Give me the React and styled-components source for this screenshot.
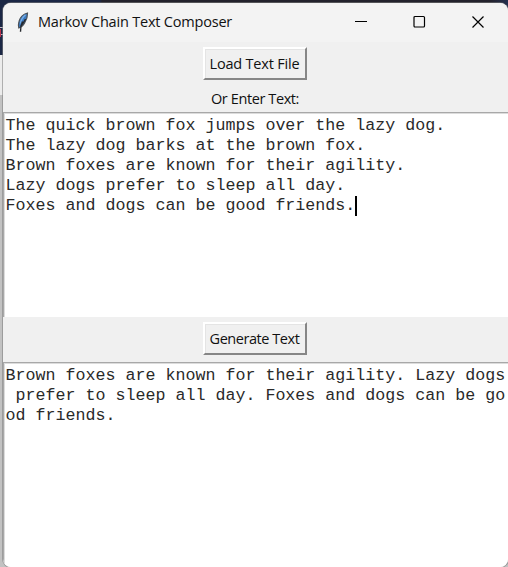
import React from 'react';
import styled, { createGlobalStyle } from 'styled-components';

const Global = createGlobalStyle`
  * { box-sizing: border-box; }
  body { margin: 0; overflow: hidden; }
`;

const Desktop = styled.div`
  width: 508px;
  height: 567px;
  padding: 3px 0 0 3px;
  overflow: hidden;
  background:
    linear-gradient(#b9304a, #b9304a) 0 29px / 1px 8px no-repeat,
    linear-gradient(#c5b9c4, #c5b9c4) 0 27px / 3px 1px no-repeat,
    linear-gradient(#c5b9c4, #c5b9c4) 0 34px / 3px 1px no-repeat,
    linear-gradient(90deg, #1b2745 0, #1b2745 100px, #23222c 102px, #23222c 490px, #24304f 508px) 0 0 / 100% 55px no-repeat,
    linear-gradient(#ececec, #ececec) 0 55px / 100% 40px no-repeat,
    #c2c2c2;
`;

const Window = styled.main`
  display: flex;
  flex-direction: column;
  width: 505px;
  height: 564px;
  overflow: hidden;
  border-radius: 8px;
  background: #f0f0f0;
  box-shadow: 0 0 0 1px rgba(125, 125, 125, 0.55);
`;

const TitleBar = styled.header`
  display: flex;
  align-items: center;
  flex: 0 0 39px;
  padding: 0 1px 1px 12px;
  background: #f3f3f3;
`;

const Title = styled.h1`
  flex: 1;
  margin: 0 0 0 7px;
  font: 400 14.5px/20px 'Open Sans', 'Noto Sans', sans-serif;
  letter-spacing: -0.2px;
  color: #111;
  white-space: nowrap;
`;

const Controls = styled.div`
  display: flex;
  height: 100%;
`;

const Control = styled.button`
  display: grid;
  place-items: center;
  width: 58px;
  padding: 0;
  border: 0;
  background: transparent;
`;

const ButtonRow = styled.div`
  display: flex;
  justify-content: center;
  flex: 0 0 auto;
  padding: 5px 2px ${(p) => p.$bottom}px 0;
`;

const PushButton = styled.button`
  width: 104px;
  height: 33px;
  padding: 0;
  border: 2px solid;
  border-color: #fff #868686 #868686 #fff;
  background: #f0f0f0;
  box-shadow: inset 1px 1px #e4e4e4;
  font: 400 14.5px/27px 'Open Sans', 'Noto Sans', sans-serif;
  letter-spacing: ${(p) => p.$tracking}px;
  color: #111;
  white-space: nowrap;
`;

const Label = styled.label`
  flex: 0 0 28px;
  min-height: 0;
  padding-right: 1px;
  font: 400 14.5px/30px 'Open Sans', 'Noto Sans', sans-serif;
  letter-spacing: -0.4px;
  text-align: center;
  color: #111;
`;

const TextPane = styled.section`
  flex: 0 0 ${(p) => p.$height}px;
  padding: 3px 0 0 1.5px;
  border: solid #a8a8a8;
  border-width: 1px 0 0 1px;
  box-shadow: inset 1px 1px #dcdcdc;
  background: #fff;
  font: 400 16.664px/20px 'Liberation Mono', monospace;
  color: #2a2a2a;
  white-space: pre;
`;

const Caret = styled.span`
  display: inline-block;
  width: 2px;
  height: 20px;
  vertical-align: top;
  background: #000;
`;

const Feather = () => (
  <svg width="16" height="22" viewBox="0 0 16 22">
    <path d="M12.500 2C8.500 3 5 6.500 4 10.500c-.7 2.500-.7 4.500-.2 6.500 2-.5 4.300-2.300 5.800-5 1.900-3.100 3.100-6.500 2.900-10Z" fill="#3d7cc4" stroke="#4b5158" strokeWidth="1.200" />
    <path d="M10.500 4C7.800 6 6 9 5.400 12.500" fill="none" stroke="#78b0ea" strokeWidth="1.300" />
    <path d="M10.500 8C9 11.500 7 13.500 5.500 15.500M7.500 10.500C6 14 5.500 17 5.500 20.800" fill="none" stroke="#25282d" strokeWidth="1.400" />
  </svg>
);

const inputText = `The quick brown fox jumps over the lazy dog.
The lazy dog barks at the brown fox.
Brown foxes are known for their agility.
Lazy dogs prefer to sleep all day.
Foxes and dogs can be good friends.`;

const outputText = `Brown foxes are known for their agility. Lazy dogs
 prefer to sleep all day. Foxes and dogs can be go
od friends.`;

export default function App() {
  return (
    <>
      <Global />
      <Desktop>
        <Window>
          <TitleBar>
            <Feather />
            <Title>Markov Chain Text Composer</Title>
            <Controls>
              <Control aria-label="Minimize">
                <svg width="14" height="14"><path d="M0 6.500h12" stroke="#000" /></svg>
              </Control>
              <Control aria-label="Maximize">
                <svg width="14" height="14"><rect x="1" y="1.500" width="10.500" height="10.500" rx="1" fill="none" stroke="#000" strokeWidth="1.200" /></svg>
              </Control>
              <Control aria-label="Close">
                <svg width="14" height="14"><path d="m1.500 1.500 11 11m0-11-11 11" stroke="#000" strokeWidth="1.200" /></svg>
              </Control>
            </Controls>
          </TitleBar>
          <ButtonRow $bottom={4}><PushButton $tracking={-0.2}>Load Text File</PushButton></ButtonRow>
          <Label>Or Enter Text:</Label>
          <TextPane $height={205}>{inputText}<Caret /></TextPane>
          <ButtonRow $bottom={7}><PushButton $tracking={-0.45}>Generate Text</PushButton></ButtonRow>
          <TextPane $height={205}>{outputText}</TextPane>
        </Window>
      </Desktop>
    </>
  );
}
